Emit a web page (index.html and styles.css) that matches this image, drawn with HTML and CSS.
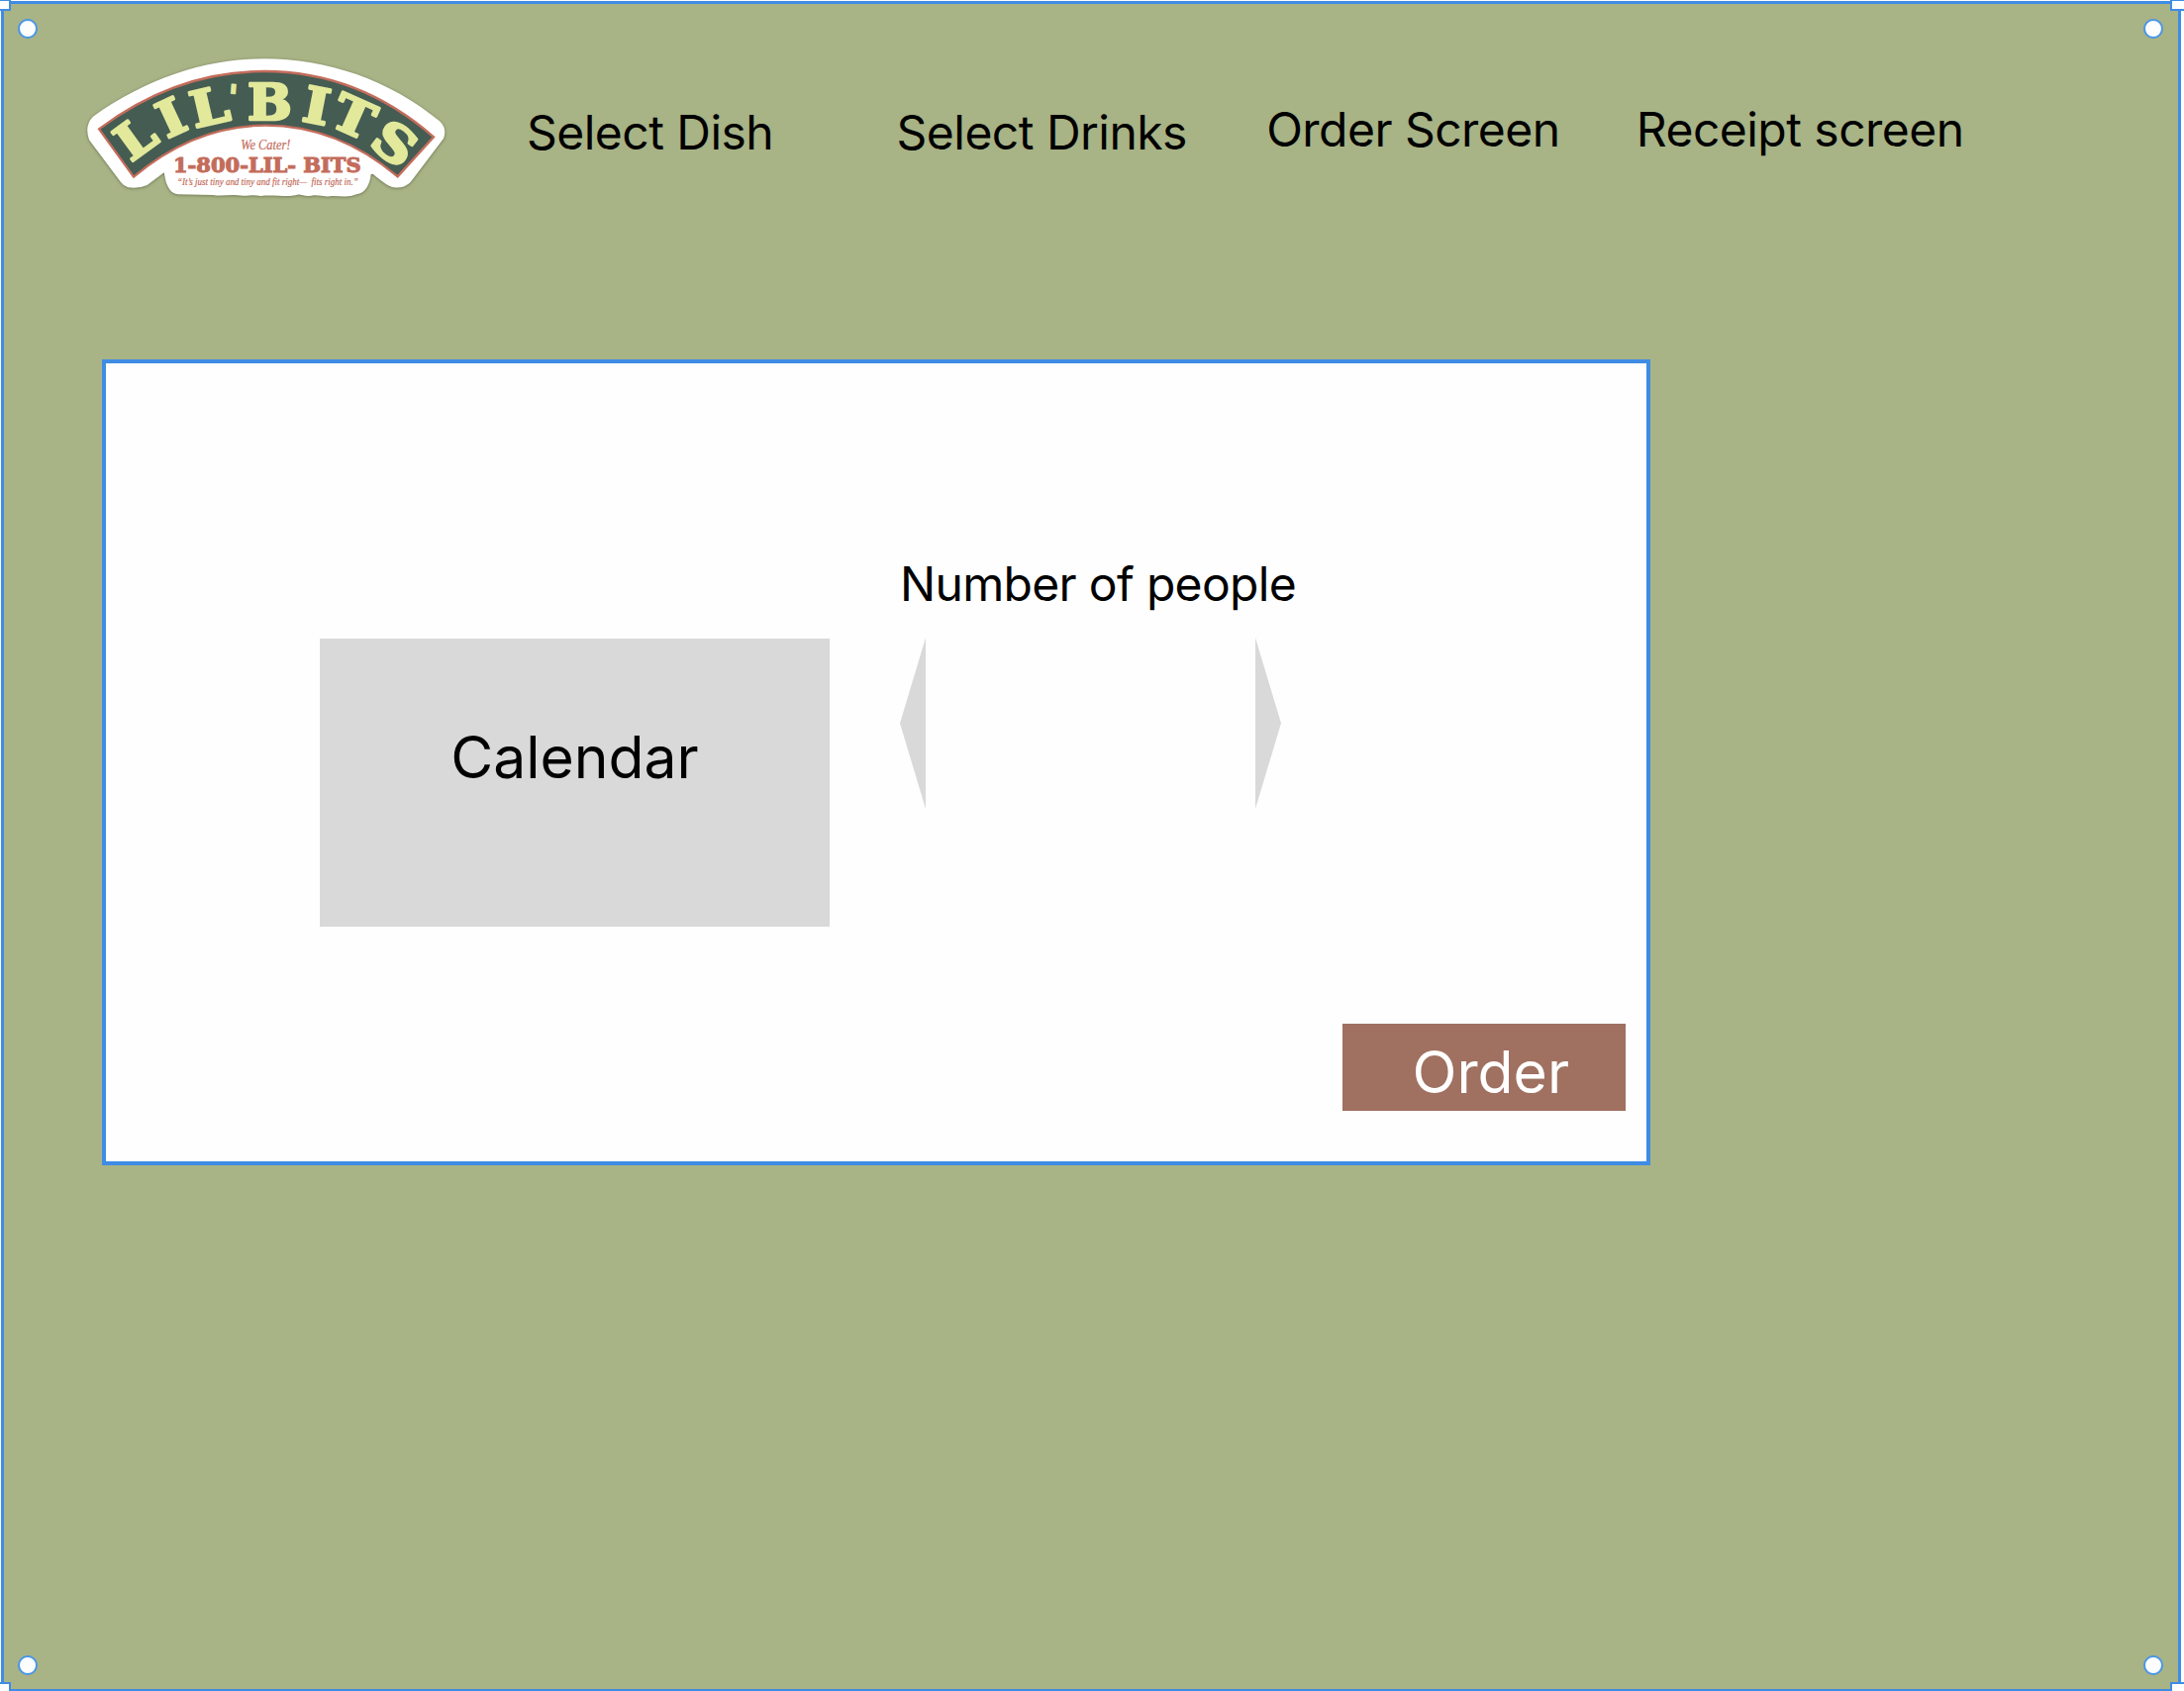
FILE: index.html
```html
<!DOCTYPE html>
<html lang="en">
<head>
<meta charset="utf-8">
<title>Lil' Bits - Order</title>
<link rel="stylesheet" href="styles.css">
</head>
<body>
<div class="screen">
  <header class="header">
    <svg class="logo" viewBox="0 0 1140 480" role="img" aria-label="Lil' Bits">
      <path class="sticker" d="M42 203C210 85 385 28 560 28C752 28 940 92 1092 217Q1116 240 1104 270L1004 402Q984 422 953 418Q936 416 890 377L884 378C881 410 867 436 840 439C815 450 790 443 765 444C745 449 725 438 703 443C680 447 670 435 655 442C632 448 590 440 550 444C525 438 510 446 480 442C455 439 430 446 405 441L300 439C276 436 270 418 263 402L257 373L206 411Q182 422 148 418Q136 415 126 402L30 274Q15 230 42 203Z"/>
      <path class="banner" d="M60 241C215 125 385 66 560 66C755 66 925 135 1074 265L965 385Q780 230 565 230Q350 230 165 386Z"/>
      <g class="arch">
        <text transform="translate(157 343) rotate(-36) scale(1.06 1)">L</text>
        <text transform="translate(266 271) rotate(-25) scale(1.1 1)">I</text>
        <text transform="translate(350 238) rotate(-13) scale(1.1 1)">L</text>
        <text class="mark" transform="translate(447 181) rotate(4)">'</text>
        <text transform="translate(510 213) scale(1.06 1)">B</text>
        <text transform="translate(671 215) rotate(11) scale(1.12 1)">I</text>
        <text transform="translate(753 227) rotate(24) scale(1.12 1)">T</text>
        <text transform="translate(874 288) rotate(38) scale(1.16 1)">S</text>
      </g>
      <text class="script" x="490" y="303" font-size="46" textLength="150" lengthAdjust="spacingAndGlyphs">We Cater!</text>
      <text class="phone" x="285" y="372" font-size="59" textLength="569" lengthAdjust="spacingAndGlyphs">1-800-LIL- BITS</text>
      <text class="script" x="297" y="410" font-size="30" textLength="548" lengthAdjust="spacingAndGlyphs">“It’s just tiny and tiny and fit right—&#160; fits right in.”</text>
    </svg>
    <nav class="nav">
      <a class="link low">Select Dish</a>
      <a class="link low">Select Drinks</a>
      <a class="link">Order Screen</a>
      <a class="link">Receipt screen</a>
    </nav>
  </header>
  <main class="panel">
    <div class="fields">
      <div class="calendar">Calendar</div>
      <div class="people">
        <div class="label">Number of people</div>
        <div class="stepper">
          <svg class="arrow" viewBox="0 0 26 173"><path d="M26 0V173L0 86.5Z"/></svg>
          <svg class="arrow" viewBox="0 0 26 173"><path d="M0 0V173L26 86.5Z"/></svg>
        </div>
      </div>
    </div>
    <div class="order">Order</div>
  </main>
  <i class="edge"></i>
  <i class="corner tl"></i><i class="corner tr"></i><i class="corner bl"></i><i class="corner br"></i>
  <i class="dot dtl"></i><i class="dot dtr"></i><i class="dot dbl"></i><i class="dot dbr"></i>
</div>
</body>
</html>
```
FILE: styles.css
```css
* { box-sizing: border-box; }
body { margin: 0; font-family: Inter, "Liberation Sans", sans-serif; color: #000; }
.screen { position: relative; width: 2206px; height: 1708px; overflow: hidden; background: #a8b386; }

.header { display: flex; height: 363px; padding: 50px 0 0 80px; }
.logo { flex: none; width: 380px; height: 160px; }
.sticker { fill: #fff; filter: drop-shadow(0 2px 5px rgba(50, 60, 30, .55)); }
.banner { fill: #455c53; stroke: #c46c5b; stroke-width: 7; }
.arch { font: bold 150px "DejaVu Serif", serif; fill: #e3e99b; stroke: #e3e99b; stroke-width: 8; stroke-linejoin: round; }
.mark { font-size: 105px; stroke-width: 3; }
.script { font-family: "Liberation Serif", serif; font-style: italic; fill: #c46c5b; stroke: #c46c5b; stroke-width: .6; }
.phone { font-family: "DejaVu Serif", serif; font-weight: bold; fill: #c46c5b; stroke: #c46c5b; stroke-width: 3; }

.nav { display: grid; grid-template-columns: repeat(4, 373.6px); align-items: start; padding: 52px 0 0 72px; }
.link { font-size: 48px; line-height: 58px; letter-spacing: -.53px; white-space: nowrap; }
.low { padding-top: 3px; }

.panel { display: flex; flex-direction: column; justify-content: space-between; width: 1564px; height: 814px; margin-left: 103px; padding: 194px 21.5px 51.5px 216px; border: 4px solid #3f8ce4; background: #fefefe; }
.fields { display: flex; gap: 71px; }
.calendar { width: 515px; height: 291px; margin-top: 84px; padding-top: 85px; background: #d9d9d9; font-size: 58.8px; line-height: 70px; text-align: center; }
.label { font-size: 48px; line-height: 58px; letter-spacing: -.67px; white-space: nowrap; }
.stepper { display: flex; justify-content: space-between; width: 385px; margin-top: 25px; }
.arrow { width: 26px; height: 173px; fill: #d9d9d9; }
.order { align-self: flex-end; width: 285.5px; height: 88px; padding: 14px 0 0 70.5px; background: #a07061; color: #fff; font-size: 58.8px; line-height: 70px; }

/* selection frame drawn over the canvas */
.edge { position: absolute; inset: 1px 3px 0 1px; border: 3px solid #3f8ce4; border-bottom-width: 2px; outline: 3px solid #fcfcfc; }
.corner { position: absolute; width: 14px; height: 12px; background: #fff; border: 2px solid #3f8ce4; }
.tl { left: -3px; top: -1px; }
.tr { left: 2192px; top: -1px; width: 16px; }
.bl { left: -3px; top: 1699px; }
.br { left: 2192px; top: 1699px; width: 16px; }
.dot { position: absolute; width: 20px; height: 20px; border: 2px solid #4896e8; border-radius: 50%; background: #fdfdfd; }
.dtl { left: 18px; top: 19px; }
.dtr { left: 2165px; top: 19px; }
.dbl { left: 18px; top: 1672px; }
.dbr { left: 2165px; top: 1672px; }
```
